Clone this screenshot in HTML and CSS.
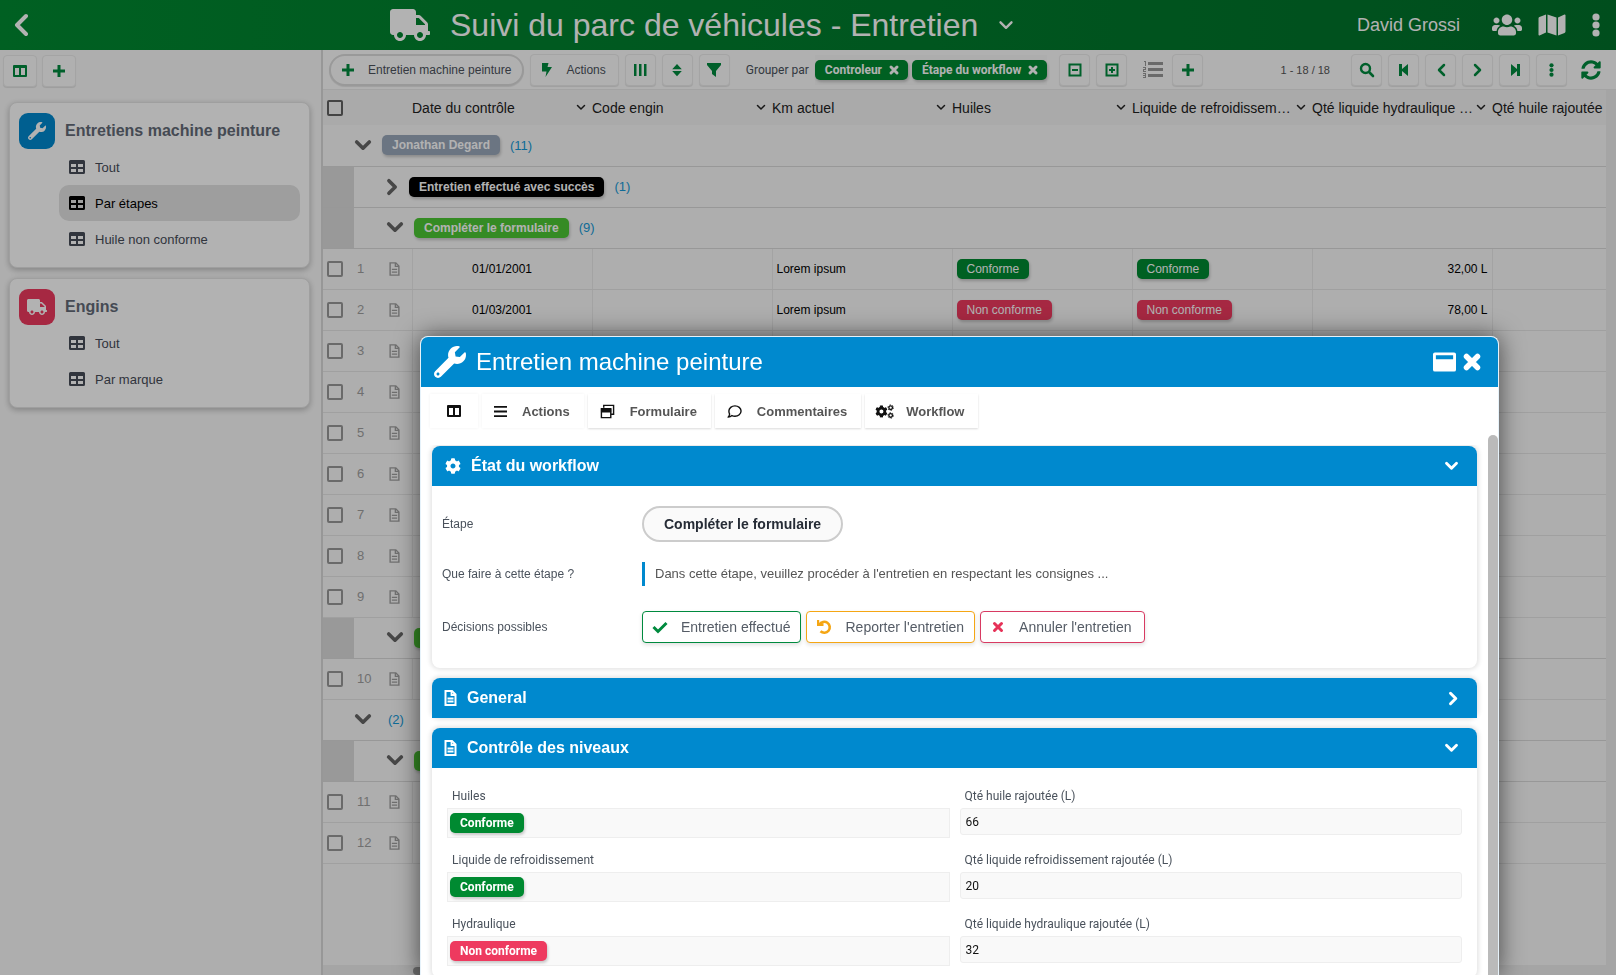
FILE: index.html
```
<!DOCTYPE html>
<html lang="fr">
<head>
<meta charset="utf-8">
<title>Suivi du parc de véhicules - Entretien</title>
<link rel="stylesheet" href="styles.css">
</head>
<body>
<svg class="sprite" aria-hidden="true">
  <symbol id="wrench" viewBox="0 0 512 512"><path d="M507.73 109.1c-2.24-9.03-13.54-12.09-20.12-5.51l-74.36 74.36-67.88-11.31-11.31-67.88 74.36-74.36c6.62-6.62 3.43-17.9-5.66-20.16-47.38-11.74-99.55.91-136.58 37.93-39.64 39.64-50.55 97.1-34.05 147.2L18.74 402.76c-24.99 24.99-24.99 65.51 0 90.5 24.99 24.99 65.51 24.99 90.5 0l213.21-213.21c50.12 16.71 107.47 5.68 147.37-34.22 37.07-37.07 49.7-89.32 37.91-136.73zM64 472c-13.25 0-24-10.75-24-24 0-13.26 10.75-24 24-24s24 10.74 24 24c0 13.25-10.75 24-24 24z"/></symbol>
  <symbol id="truck" viewBox="0 0 640 512"><path d="M624 352h-16V243.9c0-12.7-5.1-24.9-14.1-33.9L494 110.1c-9-9-21.2-14.1-33.9-14.1H416V48c0-26.5-21.5-48-48-48H48C21.5 0 0 21.5 0 48v320c0 26.5 21.5 48 48 48h16c0 53 43 96 96 96s96-43 96-96h128c0 53 43 96 96 96s96-43 96-96h48c8.8 0 16-7.2 16-16v-32c0-8.8-7.2-16-16-16zM160 464c-26.5 0-48-21.5-48-48s21.5-48 48-48 48 21.5 48 48-21.5 48-48 48zm320 0c-26.5 0-48-21.5-48-48s21.5-48 48-48 48 21.5 48 48-21.5 48-48 48zm80-208H416V144h44.1l99.9 99.9V256z"/></symbol>
  <symbol id="users" viewBox="0 0 640 512"><path d="M96 224c35.3 0 64-28.7 64-64s-28.7-64-64-64-64 28.7-64 64 28.7 64 64 64zm448 0c35.3 0 64-28.7 64-64s-28.7-64-64-64-64 28.7-64 64 28.7 64 64 64zm32 32h-64c-17.6 0-33.5 7.1-45.1 18.6 40.3 22.1 68.9 62 75.1 109.4h66c17.7 0 32-14.3 32-32v-32c0-35.3-28.7-64-64-64zm-256 0c61.9 0 112-50.1 112-112S381.9 32 320 32 208 82.1 208 144s50.1 112 112 112zm76.8 32h-8.3c-20.8 10-43.9 16-68.5 16s-47.6-6-68.5-16h-8.3C179.6 288 128 339.6 128 403.2V432c0 26.5 21.5 48 48 48h288c26.5 0 48-21.5 48-48v-28.8c0-63.6-51.6-115.2-115.2-115.2zm-223.7-13.4C161.5 263.1 145.6 256 128 256H64c-35.3 0-64 28.7-64 64v32c0 17.7 14.3 32 32 32h65.9c6.3-47.4 34.9-87.3 75.2-109.4z"/></symbol>
  <symbol id="map" viewBox="0 0 576 512"><path d="M0 117.66v346.32c0 11.32 11.43 19.06 21.94 14.86L160 416V32L20.12 87.95A32 32 0 0 0 0 117.66zM192 416l192 64V96L192 32v384zM554.06 33.16L416 96v384l139.88-55.95A32 32 0 0 0 576 394.34V48.02c0-11.32-11.43-19.06-21.94-14.86z"/></symbol>
  <symbol id="sync" viewBox="0 0 512 512"><path d="M370.72 133.28C339.458 104.008 298.888 87.962 255.848 88c-77.458.068-144.328 53.178-162.791 126.85-1.344 5.363-6.122 9.15-11.651 9.15H24.103c-7.498 0-13.194-6.807-11.807-14.176C33.933 94.924 134.813 8 256 8c66.448 0 126.791 26.136 171.315 68.685L463.03 40.97C478.149 25.851 504 36.559 504 57.941V192c0 13.255-10.745 24-24 24H345.941c-21.382 0-32.09-25.851-16.971-40.971l41.75-41.749zM32 296h134.059c21.382 0 32.09 25.851 16.971 40.971l-41.75 41.75c31.262 29.273 71.835 45.319 114.876 45.28 77.418-.07 144.315-53.144 162.787-126.849 1.344-5.363 6.122-9.15 11.651-9.15h57.304c7.498 0 13.194 6.807 11.807 14.176C478.067 417.076 377.187 504 256 504c-66.448 0-126.791-26.136-171.315-68.685L48.97 471.03C33.851 486.149 8 475.441 8 454.059V320c0-13.255 10.745-24 24-24z"/></symbol>
  <symbol id="cog" viewBox="0 0 512 512"><path d="M487.4 315.7l-42.6-24.6c4.3-23.2 4.3-47 0-70.2l42.6-24.6c4.9-2.8 7.1-8.6 5.5-14-11.1-35.6-30-67.8-54.7-94.6-3.8-4.1-10-5.1-14.8-2.3L380.8 110c-17.9-15.4-38.5-27.3-60.8-35.1V25.8c0-5.6-3.9-10.5-9.4-11.7-36.7-8.2-74.3-7.8-109.2 0-5.5 1.2-9.4 6.1-9.4 11.7V75c-22.2 7.9-42.8 19.8-60.8 35.1L88.7 85.5c-4.9-2.8-11-1.9-14.8 2.3-24.7 26.7-43.6 58.9-54.7 94.6-1.7 5.4.6 11.2 5.5 14L67.3 221c-4.3 23.2-4.3 47 0 70.2l-42.6 24.6c-4.9 2.8-7.1 8.6-5.5 14 11.1 35.6 30 67.8 54.7 94.6 3.8 4.1 10 5.1 14.8 2.3l42.6-24.6c17.9 15.4 38.5 27.3 60.8 35.1v49.2c0 5.6 3.9 10.5 9.4 11.7 36.7 8.2 74.3 7.8 109.2 0 5.5-1.2 9.4-6.1 9.4-11.7v-49.2c22.2-7.9 42.8-19.8 60.8-35.1l42.6 24.6c4.9 2.8 11 1.9 14.8-2.3 24.7-26.7 43.6-58.9 54.7-94.6 1.5-5.5-.7-11.3-5.6-14.1zM256 336c-44.1 0-80-35.9-80-80s35.9-80 80-80 80 35.9 80 80-35.9 80-80 80z"/></symbol>
  <symbol id="cogs" viewBox="0 0 640 512"><svg x="0" y="40" width="430" height="430" viewBox="0 0 512 512"><use href="#cog"/></svg><g fill="none" stroke="currentColor"><circle cx="530" cy="125" r="62" stroke-width="46"/><circle cx="530" cy="125" r="95" stroke-width="30" stroke-dasharray="45 54"/><circle cx="530" cy="390" r="62" stroke-width="46"/><circle cx="530" cy="390" r="95" stroke-width="30" stroke-dasharray="45 54"/></g></symbol>
  <symbol id="left" viewBox="0 0 14 24"><path class="line" stroke-width="4" d="M12 3 3 12l9 9"/></symbol>
  <symbol id="down" viewBox="0 0 20 14"><path class="line" stroke-width="4" d="m3 3 7 7 7-7"/></symbol>
  <symbol id="down-thin" viewBox="0 0 20 14"><path class="line" stroke-width="3" d="m3 3 7 7 7-7"/></symbol>
  <symbol id="right" viewBox="0 0 14 20"><path class="line" stroke-width="4" d="m3 3 7 7-7 7"/></symbol>
  <symbol id="prev" viewBox="0 0 16 16"><path class="line" stroke-width="2.500" d="m11 3-5 5 5 5"/></symbol>
  <symbol id="next" viewBox="0 0 16 16"><path class="line" stroke-width="2.500" d="m5 3 5 5-5 5"/></symbol>
  <symbol id="first" viewBox="0 0 16 16"><path d="M3 2h3v5l6-5v12L6 9v5H3z"/></symbol>
  <symbol id="last" viewBox="0 0 16 16"><path d="M13 2h-3v5L4 2v12l6-5v5h3z"/></symbol>
  <symbol id="dots" viewBox="0 0 8 24"><circle cx="4" cy="4" r="3.6"/><circle cx="4" cy="12" r="3.6"/><circle cx="4" cy="20" r="3.6"/></symbol>
  <symbol id="plus" viewBox="0 0 14 14"><path d="M5.500 1h3v4.500H13v3H8.500V13h-3V8.500H1v-3h4.500z"/></symbol>
  <symbol id="columns" viewBox="0 0 16 16"><path fill-rule="evenodd" d="M2 2h12a1 1 0 0 1 1 1v10a1 1 0 0 1-1 1H2a1 1 0 0 1-1-1V3a1 1 0 0 1 1-1zM3 5v7h4V5zm6 0v7h4V5z"/></symbol>
  <symbol id="table" viewBox="0 0 16 14"><path fill-rule="evenodd" d="M1.500 0h13A1.500 1.500 0 0 1 16 1.500v11a1.500 1.500 0 0 1-1.500 1.500h-13A1.500 1.500 0 0 1 0 12.500v-11A1.500 1.500 0 0 1 1.500 0zM2 4v3h5V4zm7 0v3h5V4zM2 9v3h5V9zm7 0v3h5V9z"/></symbol>
  <symbol id="bolt" viewBox="0 0 12 16"><path d="M2 1h6.500L7.500 5H12L5.500 15l1-5.500H2z"/></symbol>
  <symbol id="bars" viewBox="0 0 16 16"><path d="M2 2h2.500v12H2zm5 0h2.500v12H7zm5 0h2.500v12H12z"/></symbol>
  <symbol id="sort" viewBox="0 0 16 16"><path d="m8 1 5.500 6h-11zM2.500 9h11L8 15z"/></symbol>
  <symbol id="filter" viewBox="0 0 16 16"><path d="M1 1h14v2l-5 6v6l-4-3V9L1 3z"/></symbol>
  <symbol id="minus-box" viewBox="0 0 16 16"><path fill="none" stroke="currentColor" stroke-width="2" d="M2.500 2.500h11v11h-11zM5 8h6"/></symbol>
  <symbol id="plus-box" viewBox="0 0 16 16"><path fill="none" stroke="currentColor" stroke-width="2" d="M2.500 2.500h11v11h-11zM5 8h6M8 5v6"/></symbol>
  <symbol id="list" viewBox="0 0 20 20"><path d="M5 2h15v3H5zm0 6h15v3H5zm0 6h15v3H5zM1 1h2v5H2V2H1zM0 7h3v3H1v1h2v1H0V9h2V8H0zM0 13h3v5H0v-1h2v-1H0v-1h2v-1H0z"/></symbol>
  <symbol id="search" viewBox="0 0 16 16"><circle cx="6.500" cy="6.500" r="4.500" fill="none" stroke="currentColor" stroke-width="2.400"/><path class="line" stroke-width="2.600" d="m10.500 10.500 3.500 3.500"/></symbol>
  <symbol id="times" viewBox="0 0 16 16"><path class="line" stroke-width="4" d="m4 4 8 8m0-8-8 8"/></symbol>
  <symbol id="cross" viewBox="0 0 16 16"><path class="line" stroke-width="3" d="m4.500 4.500 7 7m0-7-7 7"/></symbol>
  <symbol id="file" viewBox="0 0 12 16"><path fill="none" stroke="currentColor" stroke-width="1.600" d="M1 1h6.500L11 4.500V15H1z"/><path fill="none" stroke="currentColor" stroke-width="1.500" d="M7 1v4h4M3 8.500h6M3 11.500h6"/></symbol>
  <symbol id="file-bold" viewBox="0 0 12 16"><path fill="none" stroke="currentColor" stroke-width="2" d="M1 1h6.500L11 4.500V15H1z"/><path fill="none" stroke="currentColor" stroke-width="1.800" d="M7 1v4h4M3 8.500h6M3 11.500h6"/></symbol>
  <symbol id="window" viewBox="0 0 24 20"><path fill-rule="evenodd" d="M2 0h20a2 2 0 0 1 2 2v16a2 2 0 0 1-2 2H2a2 2 0 0 1-2-2V2a2 2 0 0 1 2-2zm1 3v4h18V3z"/></symbol>
  <symbol id="menu" viewBox="0 0 14 14"><path d="M0 1h14v2H0zm0 5h14v2H0zm0 5h14v2H0z"/></symbol>
  <symbol id="windows" viewBox="0 0 16 16"><path fill="none" stroke="currentColor" stroke-width="1.500" d="M4 4V1.500h10.500V11H12M1.500 5h10v9.500h-10z"/><path d="M1 5h11v4H1z"/></symbol>
  <symbol id="comment" viewBox="0 0 16 16"><path fill="none" stroke="currentColor" stroke-width="1.500" stroke-linejoin="round" d="M8.500 2c3.500 0 6.500 2.400 6.500 5.500S12 13 8.500 13c-1.200 0-2.200-.2-3.200-.7C4.300 13.300 3 14 1.200 14c.9-.9 1.500-2 1.600-3.300C2.200 9.700 2 8.700 2 7.500 2 4.400 5 2 8.500 2z"/></symbol>
  <symbol id="check" viewBox="0 0 16 16"><path fill="none" stroke="currentColor" stroke-width="3" d="m1.500 8 4.500 4.500L14.500 4"/></symbol>
  <symbol id="undo" viewBox="0 0 16 16"><path fill="none" stroke="currentColor" stroke-width="2.600" d="M3.500 5.500A5.500 5.500 0 1 1 4.500 12.300"/><path d="M1 1h2.200v3.200H7.500V7H1z"/></symbol>
</svg>

<header class="topbar">
  <button class="bare back" aria-label="Retour"><svg width="14" height="24"><use href="#left"/></svg></button>
  <h1 class="title"><svg width="40" height="32"><use href="#truck"/></svg>Suivi du parc de véhicules - Entretien<svg width="16" height="11"><use href="#down-thin"/></svg></h1>
  <div class="account">
    <span class="user">David Grossi</span>
    <button class="bare" aria-label="Utilisateurs"><svg width="30" height="24"><use href="#users"/></svg></button>
    <button class="bare" aria-label="Carte"><svg width="28" height="24"><use href="#map"/></svg></button>
    <button class="bare" aria-label="Menu"><svg width="8" height="24"><use href="#dots"/></svg></button>
  </div>
</header>

<div class="layout">
  <aside class="sidebar">
    <div class="side-tools">
      <button class="btn btn-side" aria-label="Colonnes"><svg width="16" height="16"><use href="#columns"/></svg></button>
      <button class="btn btn-side" aria-label="Ajouter"><svg width="14" height="14"><use href="#plus"/></svg></button>
    </div>
    <nav class="card">
      <h2 class="card-title"><span class="tile tile-blue"><svg width="18" height="18"><use href="#wrench"/></svg></span>Entretiens machine peinture</h2>
      <a class="nav-item" href="#"><svg width="16" height="14"><use href="#table"/></svg>Tout</a>
      <a class="nav-item active" href="#"><svg width="16" height="14"><use href="#table"/></svg>Par étapes</a>
      <a class="nav-item" href="#"><svg width="16" height="14"><use href="#table"/></svg>Huile non conforme</a>
    </nav>
    <nav class="card">
      <h2 class="card-title"><span class="tile tile-red"><svg width="20" height="16"><use href="#truck"/></svg></span>Engins</h2>
      <a class="nav-item" href="#"><svg width="16" height="14"><use href="#table"/></svg>Tout</a>
      <a class="nav-item" href="#"><svg width="16" height="14"><use href="#table"/></svg>Par marque</a>
    </nav>
  </aside>

  <main class="main">
    <div class="toolbar">
      <button class="btn btn-pill"><svg width="14" height="14"><use href="#plus"/></svg>Entretien machine peinture</button>
      <button class="btn btn-wide"><svg width="12" height="16"><use href="#bolt"/></svg>Actions</button>
      <button class="btn" aria-label="Colonnes"><svg width="16" height="16"><use href="#bars"/></svg></button>
      <button class="btn" aria-label="Trier"><svg width="14" height="14"><use href="#sort"/></svg></button>
      <button class="btn" aria-label="Filtrer"><svg width="16" height="16"><use href="#filter"/></svg></button>
      <span class="group-label">Grouper par</span>
      <div class="chips">
        <button class="chip">Controleur<svg width="12" height="12"><use href="#times"/></svg></button>
        <button class="chip">Étape du workflow<svg width="12" height="12"><use href="#times"/></svg></button>
      </div>
      <button class="btn" aria-label="Tout réduire"><svg width="16" height="16"><use href="#minus-box"/></svg></button>
      <button class="btn" aria-label="Tout développer"><svg width="16" height="16"><use href="#plus-box"/></svg></button>
      <svg class="list-icon" width="20" height="20"><use href="#list"/></svg>
      <button class="btn" aria-label="Ajouter"><svg width="14" height="14"><use href="#plus"/></svg></button>
      <span class="pager">1 - 18 / 18</span>
      <button class="btn" aria-label="Rechercher"><svg width="16" height="16"><use href="#search"/></svg></button>
      <button class="btn" aria-label="Première page"><svg width="16" height="16"><use href="#first"/></svg></button>
      <button class="btn" aria-label="Page précédente"><svg width="16" height="16"><use href="#prev"/></svg></button>
      <button class="btn" aria-label="Page suivante"><svg width="16" height="16"><use href="#next"/></svg></button>
      <button class="btn" aria-label="Dernière page"><svg width="16" height="16"><use href="#last"/></svg></button>
      <button class="btn" aria-label="Plus"><svg width="5" height="14"><use href="#dots"/></svg></button>
      <button class="bare refresh" aria-label="Actualiser"><svg width="20" height="20"><use href="#sync"/></svg></button>
    </div>

    <div class="grid-wrap">
    <table class="grid">
      <colgroup><col class="c-indent"><col class="c-num"><col class="c-data"><col class="c-data"><col class="c-data"><col class="c-data"><col class="c-data"><col class="c-data"><col></colgroup>
      <thead>
        <tr>
          <th colspan="2"><div class="lead"><input class="box dark" type="checkbox" aria-label="Tout sélectionner"></div></th>
          <th><div class="head">Date du contrôle<svg width="10" height="7"><use href="#down-thin"/></svg></div></th>
          <th><div class="head">Code engin<svg width="10" height="7"><use href="#down-thin"/></svg></div></th>
          <th><div class="head">Km actuel<svg width="10" height="7"><use href="#down-thin"/></svg></div></th>
          <th><div class="head">Huiles<svg width="10" height="7"><use href="#down-thin"/></svg></div></th>
          <th><div class="head">Liquide de refroidissem…<svg width="10" height="7"><use href="#down-thin"/></svg></div></th>
          <th><div class="head">Qté liquide hydraulique …<svg width="10" height="7"><use href="#down-thin"/></svg></div></th>
          <th>Qté huile rajoutée</th>
        </tr>
      </thead>
      <tbody>
        <tr class="group"><td></td><td colspan="8"><div class="group-in"><svg width="18" height="13"><use href="#down"/></svg><span class="tag slate">Jonathan Degard</span><span class="count">(11)</span></div></td></tr>
        <tr class="group sub"><td class="indent"></td><td colspan="8"><div class="group-in"><svg width="13" height="18"><use href="#right"/></svg><span class="tag black">Entretien effectué avec succès</span><span class="count">(1)</span></div></td></tr>
        <tr class="group sub"><td class="indent"></td><td colspan="8"><div class="group-in"><svg width="18" height="13"><use href="#down"/></svg><span class="tag lime">Compléter le formulaire</span><span class="count">(9)</span></div></td></tr>
        <tr><td colspan="2"><div class="lead"><input class="box" type="checkbox" aria-label="Ligne 1"><span class="num">1</span><svg width="11" height="14"><use href="#file"/></svg></div></td><td class="date">01/01/2001</td><td></td><td>Lorem ipsum</td><td><span class="tag green">Conforme</span></td><td><span class="tag green">Conforme</span></td><td class="qty">32,00 L</td><td></td></tr>
        <tr><td colspan="2"><div class="lead"><input class="box" type="checkbox" aria-label="Ligne 2"><span class="num">2</span><svg width="11" height="14"><use href="#file"/></svg></div></td><td class="date">01/03/2001</td><td></td><td>Lorem ipsum</td><td><span class="tag red">Non conforme</span></td><td><span class="tag red">Non conforme</span></td><td class="qty">78,00 L</td><td></td></tr>
        <tr><td colspan="2"><div class="lead"><input class="box" type="checkbox" aria-label="Ligne 3"><span class="num">3</span><svg width="11" height="14"><use href="#file"/></svg></div></td><td></td><td></td><td></td><td></td><td></td><td></td><td></td></tr>
        <tr><td colspan="2"><div class="lead"><input class="box" type="checkbox" aria-label="Ligne 4"><span class="num">4</span><svg width="11" height="14"><use href="#file"/></svg></div></td><td></td><td></td><td></td><td></td><td></td><td></td><td></td></tr>
        <tr><td colspan="2"><div class="lead"><input class="box" type="checkbox" aria-label="Ligne 5"><span class="num">5</span><svg width="11" height="14"><use href="#file"/></svg></div></td><td></td><td></td><td></td><td></td><td></td><td></td><td></td></tr>
        <tr><td colspan="2"><div class="lead"><input class="box" type="checkbox" aria-label="Ligne 6"><span class="num">6</span><svg width="11" height="14"><use href="#file"/></svg></div></td><td></td><td></td><td></td><td></td><td></td><td></td><td></td></tr>
        <tr><td colspan="2"><div class="lead"><input class="box" type="checkbox" aria-label="Ligne 7"><span class="num">7</span><svg width="11" height="14"><use href="#file"/></svg></div></td><td></td><td></td><td></td><td></td><td></td><td></td><td></td></tr>
        <tr><td colspan="2"><div class="lead"><input class="box" type="checkbox" aria-label="Ligne 8"><span class="num">8</span><svg width="11" height="14"><use href="#file"/></svg></div></td><td></td><td></td><td></td><td></td><td></td><td></td><td></td></tr>
        <tr><td colspan="2"><div class="lead"><input class="box" type="checkbox" aria-label="Ligne 9"><span class="num">9</span><svg width="11" height="14"><use href="#file"/></svg></div></td><td></td><td></td><td></td><td></td><td></td><td></td><td></td></tr>
        <tr class="group sub"><td class="indent"></td><td colspan="8"><div class="group-in"><svg width="18" height="13"><use href="#down"/></svg><span class="tag lime blank"></span></div></td></tr>
        <tr><td colspan="2"><div class="lead"><input class="box" type="checkbox" aria-label="Ligne 10"><span class="num">10</span><svg width="11" height="14"><use href="#file"/></svg></div></td><td></td><td></td><td></td><td></td><td></td><td></td><td></td></tr>
        <tr class="group"><td></td><td colspan="8"><div class="group-in"><svg width="18" height="13"><use href="#down"/></svg><span class="count alone">(2)</span></div></td></tr>
        <tr class="group sub"><td class="indent"></td><td colspan="8"><div class="group-in"><svg width="18" height="13"><use href="#down"/></svg><span class="tag lime blank"></span></div></td></tr>
        <tr><td colspan="2"><div class="lead"><input class="box" type="checkbox" aria-label="Ligne 11"><span class="num">11</span><svg width="11" height="14"><use href="#file"/></svg></div></td><td></td><td></td><td></td><td></td><td></td><td></td><td></td></tr>
        <tr><td colspan="2"><div class="lead"><input class="box" type="checkbox" aria-label="Ligne 12"><span class="num">12</span><svg width="11" height="14"><use href="#file"/></svg></div></td><td></td><td></td><td></td><td></td><td></td><td></td><td></td></tr>
      </tbody>
    </table>
    </div>
    <div class="hscroll"><div class="hthumb"></div></div>
  </main>
</div>

<div class="shade"></div>

<section class="modal" role="dialog" aria-labelledby="modal-title">
  <header class="modal-head">
    <svg width="32" height="32"><use href="#wrench"/></svg>
    <h2 id="modal-title">Entretien machine peinture</h2>
    <button class="bare" aria-label="Agrandir"><svg width="23" height="20"><use href="#window"/></svg></button>
    <button class="bare" aria-label="Fermer"><svg width="22" height="22"><use href="#times"/></svg></button>
  </header>
  <div class="modal-tools">
    <button class="tool tool-icon" aria-label="Colonnes"><svg width="16" height="16"><use href="#columns"/></svg></button>
    <button class="tool tool-soft"><svg width="13" height="13"><use href="#menu"/></svg>Actions</button>
    <button class="tool"><svg width="15" height="15"><use href="#windows"/></svg>Formulaire</button>
    <button class="tool"><svg width="15" height="15"><use href="#comment"/></svg>Commentaires</button>
    <button class="tool tool-gears"><svg width="19" height="15"><use href="#cogs"/></svg>Workflow</button>
  </div>
  <div class="modal-body">
    <section class="panel">
      <h3 class="panel-head"><svg width="16" height="16"><use href="#cog"/></svg>État du workflow<svg class="fold" width="15" height="10"><use href="#down"/></svg></h3>
      <dl class="workflow">
        <dt>Étape</dt>
        <dd><button class="step">Compléter le formulaire</button></dd>
        <dt>Que faire à cette étape ?</dt>
        <dd><p class="hint">Dans cette étape, veuillez procéder à l'entretien en respectant les consignes ...</p></dd>
        <dt>Décisions possibles</dt>
        <dd class="choices">
          <button class="choice ok"><svg width="16" height="16"><use href="#check"/></svg>Entretien effectué</button>
          <button class="choice later"><svg width="16" height="16"><use href="#undo"/></svg>Reporter l'entretien</button>
          <button class="choice cancel"><svg width="16" height="16"><use href="#cross"/></svg>Annuler l'entretien</button>
        </dd>
      </dl>
    </section>
    <section class="panel">
      <h3 class="panel-head doc"><svg width="13" height="16"><use href="#file-bold"/></svg>General<svg class="fold" width="11" height="15"><use href="#right"/></svg></h3>
    </section>
    <section class="panel">
      <h3 class="panel-head doc"><svg width="13" height="16"><use href="#file-bold"/></svg>Contrôle des niveaux<svg class="fold" width="15" height="10"><use href="#down"/></svg></h3>
      <div class="fields">
        <div class="field"><span class="label">Huiles</span><div class="value"><span class="tag green">Conforme</span></div></div>
        <div class="field"><label class="label" for="q1">Qté huile rajoutée (L)</label><input class="text" id="q1" type="text" value="66"></div>
        <div class="field"><span class="label">Liquide de refroidissement</span><div class="value"><span class="tag green">Conforme</span></div></div>
        <div class="field"><label class="label" for="q2">Qté liquide refroidissement rajoutée (L)</label><input class="text" id="q2" type="text" value="20"></div>
        <div class="field"><span class="label">Hydraulique</span><div class="value"><span class="tag red">Non conforme</span></div></div>
        <div class="field"><label class="label" for="q3">Qté liquide hydraulique rajoutée (L)</label><input class="text" id="q3" type="text" value="32"></div>
      </div>
    </section>
  </div>
  <div class="vthumb"></div>
</section>
</body>
</html>
```
FILE: styles.css
```
* { box-sizing: border-box; }
body {
  margin: 0;
  height: 100vh;
  display: flex;
  flex-direction: column;
  overflow: hidden;
  font-family: "Liberation Sans", Arial, sans-serif;
  font-size: 13px;
  color: #4a525c;
  background: #fcfcfc;
}
button { font: inherit; color: inherit; cursor: pointer; }
h1, h2, h3, p, dl, dd { margin: 0; }
svg { fill: currentColor; flex: none; display: block; }
.sprite { position: absolute; width: 0; height: 0; }
.line { fill: none; stroke: currentColor; stroke-linecap: round; stroke-linejoin: round; }
.bare { border: 0; background: none; padding: 0; display: flex; }

/* top bar */
.topbar {
  flex: none;
  height: 50px;
  display: flex;
  align-items: center;
  padding: 0 16px 0 14px;
  color: #fff;
  background: linear-gradient(90deg, #008a31, #00702a);
}
.back { width: 376px; }
.title { display: flex; align-items: center; gap: 20px; flex: 1; font-size: 32px; font-weight: 400; line-height: 40px; white-space: nowrap; }
.account { display: flex; align-items: center; gap: 16px; }
.account .bare:last-child { margin-left: 10px; }
.user { font-size: 18px; margin-right: 16px; }

.layout { flex: 1; display: flex; min-height: 0; }

/* sidebar */
.sidebar { width: 323px; flex: none; border-right: 2px solid #d8d8d8; background: #fafafa; }
.side-tools { display: flex; gap: 5px; padding: 5px 3px 15px; }
.card {
  margin: 0 11px 10px 9px;
  padding: 10px 9px;
  background: #fff;
  border: 1px solid #e4e4e4;
  border-radius: 8px;
  box-shadow: 0 2px 6px rgba(0, 0, 0, .25);
}
.card-title { display: flex; align-items: center; gap: 10px; font-size: 16px; line-height: 36px; font-weight: 700; color: #636b78; }
.tile { width: 36px; height: 36px; border-radius: 9px; display: flex; align-items: center; justify-content: center; color: #fff; }
.tile-blue { background: #0089ce; }
.tile-red { background: #ee3a5f; }
.nav-item { display: flex; align-items: center; gap: 10px; height: 36px; margin: 0 0 0 40px; padding-left: 10px; border-radius: 10px; color: #474c58; text-decoration: none; }
.nav-item.active { background: #e2e2e2; color: #000; }

/* buttons */
.btn {
  width: 31px; height: 32px;
  flex: none;
  display: flex; align-items: center; justify-content: center;
  padding: 0;
  border: 1px solid #ebebeb;
  border-radius: 4px;
  background: #fdfdfd;
  box-shadow: 0 1px 1px rgba(0, 0, 0, .1);
  font-size: 12px;
  color: #4c525c;
}
.btn svg, .refresh { color: #008a3e; }
.btn-side { width: 34px; }
.btn-pill { width: auto; padding: 0 11px 0 10px; gap: 13px; border: 2px solid #dcdcdc; border-radius: 16px; }
.btn-wide { width: auto; padding: 0 12px 0 9px; gap: 14px; }

/* toolbar */
.toolbar { flex: none; display: flex; align-items: center; gap: 6px; height: 40px; padding: 0 15px 0 6px; background: #fdfdfd; border-bottom: 1px solid #eaeaea; }
.group-label { margin-left: 10px; font-family: Roboto, sans-serif; font-size: 12px; }
.chips { display: flex; gap: 4px; padding: 5px 0; margin-right: 6px; background: #f8f8f8; }
.chip, .tag {
  display: inline-flex; align-items: center;
  height: 20px;
  padding: 0 10px;
  border: 0;
  border-radius: 5px;
  color: #fff;
  background: #008a31;
  box-shadow: 1px 2px 3px rgba(0, 0, 0, .2);
  font-size: 12px;
  line-height: 20px;
  white-space: nowrap;
}
.chip { padding: 0 8px 0 10px; gap: 6px; font-family: Roboto, sans-serif; font-weight: 700; }
.list-icon { margin: 0 3px 0 10px; color: #999; }
.pager { margin-left: auto; margin-right: 15px; font-size: 11px; color: #555; }
.refresh { margin-left: 8px; }

/* grid */
.main { flex: 1; min-width: 0; display: flex; flex-direction: column; background: #ececec; }
.grid-wrap { flex: 1; min-height: 0; overflow: hidden; margin-right: 10px; background: #f9f9f9; }
.grid { width: 100%; table-layout: fixed; border-collapse: collapse; font-size: 12px; color: #000; }
.c-indent { width: 31px; }
.c-num { width: 58px; }
.c-data { width: 180px; }
.grid th { height: 35px; padding: 0; background: #f4f4f4; font-weight: 400; text-align: left; font-size: 14px; color: #222; white-space: nowrap; }
.head { display: flex; align-items: center; justify-content: space-between; padding-right: 6px; }
.grid td { height: 41px; padding: 0 4px; border-bottom: 1px solid #e6e6e6; border-right: 1px solid #eaeaea; }
.grid td:last-child { border-right: 0; }
.grid .group td { padding: 0; border-right: 0; border-bottom-color: #dadada; }
.grid .indent { background: #dbdbdb; border-bottom-color: #dbdbdb; }
.group-in { display: flex; align-items: center; gap: 10px; color: #666; }
.sub .group-in { padding-left: 32px; }
.count { font-size: 13px; color: #169ad8; }
.alone { margin-left: 6px; }
.date { text-align: center; }
.qty { text-align: right; }
.lead { display: flex; align-items: center; color: #a0a0a0; }
th .lead { padding-left: 4px; }
.num { width: 46px; padding-left: 14px; font-size: 13px; }
.box { appearance: none; width: 16px; height: 16px; margin: 0; border: 2px solid #999; border-radius: 2px; background: none; flex: none; }
.box.dark { border-color: #606060; }
.slate { background: #9aa8bb; font-weight: 700; }
.black { background: #000; font-weight: 700; }
.lime { background: #4cc734; font-weight: 700; }
.green { background: #008a31; }
.red { background: #ee3a5f; }
.blank { width: 155px; }
.hscroll { height: 10px; flex: none; padding: 2px 10px 0 90px; }
.hthumb { height: 8px; width: 80%; border-radius: 4px; background: #999; }

/* dialog */
.shade { position: fixed; inset: 0; background: rgba(0, 0, 0, .3); }
.modal {
  position: absolute;
  top: 336px; bottom: 0; left: 420px; right: 117px;
  display: flex; flex-direction: column;
  border: 1px solid #e6f2fa;
  border-bottom: 0;
  border-radius: 8px 8px 0 0;
  overflow: hidden;
  background: #fff;
  box-shadow: 0 0 24px rgba(0, 0, 0, .6);
}
.modal-head { flex: none; height: 50px; display: flex; align-items: center; gap: 10px; padding: 0 15px 0 13px; color: #fff; background: #0089ce; }
.modal-head h2 { flex: 1; font-size: 24px; font-weight: 400; }
.modal-head .bare + .bare { margin-left: -5px; }
.modal-tools { flex: none; display: flex; gap: 4px; padding: 7px 9px 17px; }
.tool { display: flex; align-items: center; gap: 15px; height: 34px; padding: 0 14px 0 12px; border: 0; background: #fff; box-shadow: 0 1px 2px rgba(0, 0, 0, .15); font-weight: 700; color: #555; }
.tool svg { color: #111; }
.tool-icon { width: 48px; padding: 0; justify-content: center; box-shadow: 0 0 3px rgba(0, 0, 0, .06); }
.tool-soft { box-shadow: 0 0 3px rgba(0, 0, 0, .06); }
.tool-gears { gap: 12px; padding-left: 10px; }
.modal-body { flex: 1; min-height: 0; overflow: hidden; display: flex; flex-direction: column; gap: 10px; padding: 1px 21px 0 11px; }
.panel { flex: none; border-radius: 8px; background: #fff; box-shadow: 0 0 4px 2px rgba(0, 0, 0, .1); }
.panel-head { display: flex; align-items: center; gap: 10px; height: 40px; padding: 0 18px 0 13px; border-radius: 8px 8px 0 0; font-size: 16px; color: #fff; background: #0089ce; }
.doc { padding-left: 12px; }
.fold { margin-left: auto; }
.workflow { display: grid; grid-template-columns: 200px 1fr; align-items: center; row-gap: 20px; padding: 20px 10px 25px; }
.workflow dt { font-size: 12px; }
.workflow dt:last-of-type { padding-top: 5px; }
.step { height: 36px; padding: 0 20px; border: 2px solid #ccc; border-radius: 18px; background: #fafafa; font-size: 14px; font-weight: 700; color: #262c36; }
.hint { padding-left: 10px; border-left: 3px solid #0089ce; line-height: 24px; color: #555; }
.choices { display: flex; gap: 5px; padding-top: 5px; }
.choice { display: flex; align-items: center; gap: 13px; height: 32px; padding: 0 10px 0 9px; border: 1px solid; border-radius: 4px; background: #fff; box-shadow: 0 2px 4px rgba(0, 0, 0, .12); font-size: 14px; color: #555c66; }
.ok { border-color: #008a3e; }
.ok svg { color: #008a3e; }
.later { border-color: #f5a614; }
.later svg { color: #f5a614; }
.cancel { border-color: #d83a62; padding-right: 12px; }
.cancel svg { color: #e63258; }
.fields { display: grid; grid-template-columns: 1fr 1fr; column-gap: 10px; row-gap: 13px; padding: 19px 15px 12px; }
.field { display: flex; flex-direction: column; align-items: stretch; font-family: Roboto, sans-serif; font-size: 12px; }
.label { padding-left: 5px; line-height: 18px; }
.value { height: 30px; margin-top: 3px; padding: 4px 2px; border: 1px solid #eee; background: #f9f9f9; }
.value .tag { font-weight: 700; }
.text { height: 27px; margin-top: 3px; padding: 0 5px; border: 1px solid #eee; border-radius: 3px; background: #f9f9f9; font: inherit; color: #111; }
.vthumb { position: absolute; top: 98px; right: 0; bottom: 0; width: 10px; border-radius: 6px 6px 0 0; background: #bababa; }
```
